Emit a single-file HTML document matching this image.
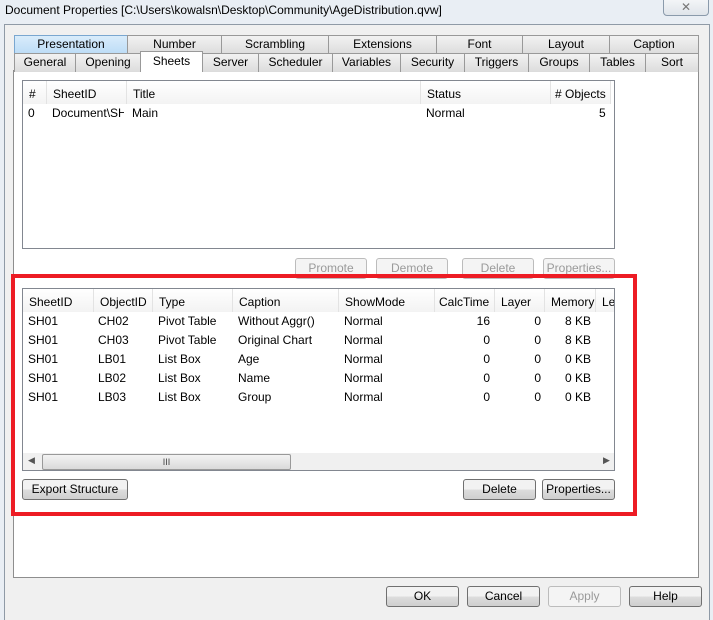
<!DOCTYPE html><html><head><style>
*{margin:0;padding:0;box-sizing:border-box}
body{width:713px;height:620px;background:#e9eef4;font-family:"Liberation Sans",sans-serif;font-size:12px;color:#000;position:relative;overflow:hidden}
.a{position:absolute}
.tab{position:absolute;height:19px;border:1px solid #999;border-bottom:none;background:linear-gradient(#f2f2f2,#dcdcdc);text-align:center;line-height:17px;font-size:12px}
.btn{position:absolute;height:21px;border:1px solid #707070;border-radius:3px;background:linear-gradient(#f2f2f2 50%,#dddddd 50%,#cfcfcf);text-align:center;line-height:19px}
.dis{border-color:#bcbcbc;color:#9a9a9a;background:#f4f4f4}
.lst{position:absolute;background:#fff;border:1px solid #828790}
.hd{position:absolute;top:0;height:23px;line-height:26px;border-right:1px solid #e3e3e3;padding-left:6px;background:linear-gradient(#fff,#f3f3f3)}
.c{position:absolute;line-height:19px}
</style></head><body>
<div class="a" style="left:5px;top:3px;font-size:12px">Document Properties [C:\Users\kowalsn\Desktop\Community\AgeDistribution.qvw]</div>
<div class="a" style="left:663px;top:-2px;width:46px;height:18px;border:1px solid #8a9aab;border-radius:0 0 4px 4px;background:linear-gradient(#f4f6f8,#dfe4ea);text-align:center;color:#777;font-size:12px;line-height:16px">✕</div>
<div class="a" style="left:4px;top:24px;width:706px;height:596px;background:#f0f0f0;border:1px solid #8f9aa6;border-bottom:none"></div>
<div class="a" style="left:13px;top:70px;width:686px;height:508px;background:#fff;border:1px solid #8e8e8e"></div>
<div class="tab" style="left:14px;top:35px;width:114px;background:linear-gradient(#d9ecfb,#bcdcf6);border-color:#7aa7d0">Presentation</div>
<div class="tab" style="left:127px;top:35px;width:95px">Number</div>
<div class="tab" style="left:221px;top:35px;width:108px">Scrambling</div>
<div class="tab" style="left:328px;top:35px;width:109px">Extensions</div>
<div class="tab" style="left:436px;top:35px;width:87px">Font</div>
<div class="tab" style="left:522px;top:35px;width:88px">Layout</div>
<div class="tab" style="left:609px;top:35px;width:90px">Caption</div>
<div class="tab" style="left:14px;top:53px;width:62px">General</div>
<div class="tab" style="left:75px;top:53px;width:66px">Opening</div>
<div class="tab" style="left:202px;top:53px;width:57px">Server</div>
<div class="tab" style="left:258px;top:53px;width:75px">Scheduler</div>
<div class="tab" style="left:332px;top:53px;width:69px">Variables</div>
<div class="tab" style="left:400px;top:53px;width:65px">Security</div>
<div class="tab" style="left:464px;top:53px;width:65px">Triggers</div>
<div class="tab" style="left:528px;top:53px;width:62px">Groups</div>
<div class="tab" style="left:589px;top:53px;width:57px">Tables</div>
<div class="tab" style="left:645px;top:53px;width:54px">Sort</div>
<div class="tab" style="left:140px;top:51px;width:63px;height:21px;background:#fff;line-height:18px">Sheets</div>

<div class="lst" style="left:22px;top:80px;width:593px;height:169px">
<div class="hd" style="left:0;width:24px">#</div>
<div class="hd" style="left:24px;width:80px">SheetID</div>
<div class="hd" style="left:104px;width:294px">Title</div>
<div class="hd" style="left:398px;width:130px">Status</div>
<div class="hd" style="left:528px;width:60px;padding-left:4px"># Objects</div>
<div class="c" style="left:5px;top:23px">0</div>
<div class="c" style="left:29px;top:23px;width:72px;overflow:hidden;white-space:nowrap">Document\SH01</div>
<div class="c" style="left:109px;top:23px">Main</div>
<div class="c" style="left:403px;top:23px">Normal</div>
<div class="c" style="left:576px;top:23px">5</div>
</div>
<div class="btn dis" style="left:295px;top:258px;width:72px">Promote</div>
<div class="btn dis" style="left:376px;top:258px;width:72px">Demote</div>
<div class="btn dis" style="left:462px;top:258px;width:72px">Delete</div>
<div class="btn dis" style="left:543px;top:258px;width:72px">Properties...</div>

<div class="lst" style="left:22px;top:288px;width:593px;height:183px;overflow:hidden">
<div class="hd" style="left:0;width:71px">SheetID</div>
<div class="hd" style="left:71px;width:59px">ObjectID</div>
<div class="hd" style="left:130px;width:80px">Type</div>
<div class="hd" style="left:210px;width:106px">Caption</div>
<div class="hd" style="left:316px;width:96px">ShowMode</div>
<div class="hd" style="left:412px;width:60px;padding-left:4px">CalcTime</div>
<div class="hd" style="left:472px;width:50px">Layer</div>
<div class="hd" style="left:522px;width:51px">Memory</div>
<div class="hd" style="left:573px;width:40px">Lev</div>
<div class="c" style="left:5px;top:23px;line-height:19px">SH01<br>SH01<br>SH01<br>SH01<br>SH01</div>
<div class="c" style="left:75px;top:23px">CH02<br>CH03<br>LB01<br>LB02<br>LB03</div>
<div class="c" style="left:135px;top:23px">Pivot Table<br>Pivot Table<br>List Box<br>List Box<br>List Box</div>
<div class="c" style="left:215px;top:23px">Without Aggr()<br>Original Chart<br>Age<br>Name<br>Group</div>
<div class="c" style="left:321px;top:23px">Normal<br>Normal<br>Normal<br>Normal<br>Normal</div>
<div class="c" style="left:440px;top:23px;width:27px;text-align:right">16<br>0<br>0<br>0<br>0</div>
<div class="c" style="left:500px;top:23px;width:18px;text-align:right">0<br>0<br>0<br>0<br>0</div>
<div class="c" style="left:535px;top:23px;width:33px;text-align:right">8 KB<br>8 KB<br>0 KB<br>0 KB<br>0 KB</div>
<div class="a" style="left:0;top:164px;width:593px;height:18px;background:#f0f0f0"></div>
<div class="a" style="left:5px;top:166px;font-size:9px;color:#555">◀</div>
<div class="a" style="left:580px;top:166px;font-size:9px;color:#555">▶</div>
<div class="a" style="left:19px;top:165px;width:249px;height:16px;border:1px solid #999;border-radius:2px;background:linear-gradient(#f3f3f3,#dadada);text-align:center;font-size:9px;line-height:14px;color:#444">III</div>
</div>
<div class="btn" style="left:22px;top:479px;width:106px">Export Structure</div>
<div class="btn" style="left:463px;top:479px;width:73px">Delete</div>
<div class="btn" style="left:542px;top:479px;width:73px">Properties...</div>
<div class="a" style="left:11px;top:274px;width:626px;height:242px;border:4px solid #ed1c24"></div>

<div class="btn" style="left:386px;top:586px;width:73px">OK</div>
<div class="btn" style="left:467px;top:586px;width:73px">Cancel</div>
<div class="btn dis" style="left:548px;top:586px;width:73px">Apply</div>
<div class="btn" style="left:629px;top:586px;width:73px">Help</div>
</body></html>
